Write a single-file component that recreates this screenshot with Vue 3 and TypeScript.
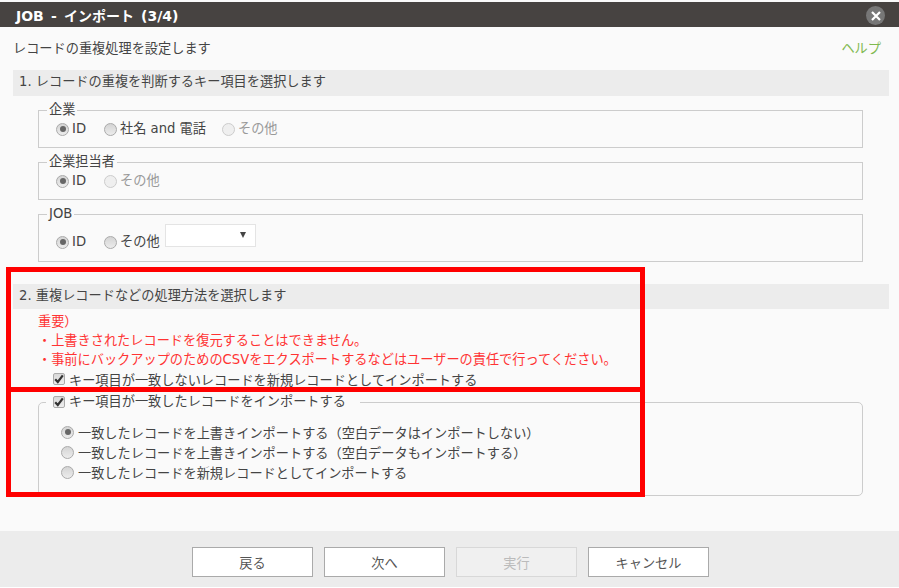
<script setup lang="ts">
interface Choice {
  label: string
  checked?: boolean
  disabled?: boolean
  gap: number
}

interface KeyGroup {
  legend: string
  tall?: boolean
  choices: Choice[]
}

const keyGroups: KeyGroup[] = [
  {
    legend: '企業',
    choices: [
      { label: 'ID', checked: true, gap: 18 },
      { label: '社名 and 電話', gap: 16 },
      { label: 'その他', disabled: true, gap: 0 },
    ],
  },
  {
    legend: '企業担当者',
    choices: [
      { label: 'ID', checked: true, gap: 18 },
      { label: 'その他', disabled: true, gap: 0 },
    ],
  },
  {
    legend: 'JOB',
    tall: true,
    choices: [
      { label: 'ID', checked: true, gap: 18 },
      { label: 'その他', gap: 0 },
    ],
  },
]

const importModes = [
  { label: '一致したレコードを上書きインポートする（空白データはインポートしない）', checked: true },
  { label: '一致したレコードを上書きインポートする（空白データもインポートする）', checked: false },
  { label: '一致したレコードを新規レコードとしてインポートする', checked: false },
]

const buttons = [
  { label: '戻る', disabled: false },
  { label: '次へ', disabled: false },
  { label: '実行', disabled: true },
  { label: 'キャンセル', disabled: false },
]
</script>

<template>
  <div class="dialog">
    <header class="title-bar">
      <span class="title">JOB - インポート (3/4)</span>
      <span class="close">
        <svg width="10" height="10" viewBox="0 0 10 10">
          <path d="M1 1 9 9M9 1 1 9" stroke="#fff" stroke-width="2.2" fill="none" />
        </svg>
      </span>
    </header>

    <main class="body">
      <div class="intro">
        <span>レコードの重複処理を設定します</span>
        <a class="help">ヘルプ</a>
      </div>

      <h2 class="section-head">1. レコードの重複を判断するキー項目を選択します</h2>

      <fieldset v-for="group in keyGroups" :key="group.legend" class="key-group" :class="{ tall: group.tall }">
        <legend>{{ group.legend }}</legend>
        <div class="choices">
          <label
            v-for="choice in group.choices"
            :key="choice.label"
            class="choice"
            :class="{ disabled: choice.disabled }"
            :style="{ marginRight: choice.gap + 'px' }"
          >
            <i class="radio" :class="{ checked: choice.checked }"></i>{{ choice.label }}
          </label>
          <div v-if="group.tall" class="select">
            <span class="arrow"></span>
          </div>
        </div>
      </fieldset>

      <h2 class="section-head second">2. 重複レコードなどの処理方法を選択します</h2>

      <div class="warning">
        <p>重要）</p>
        <p>・上書きされたレコードを復元することはできません。</p>
        <p>・事前にバックアップのためのCSVをエクスポートするなどはユーザーの責任で行ってください。</p>
      </div>

      <label class="check-row">
        <i class="check"><svg width="10" height="10" viewBox="0 0 10 10"><path d="M1.2 5.2 3.8 8 8.8 1.4" stroke="#333" stroke-width="2.2" fill="none" /></svg></i>
        キー項目が一致しないレコードを新規レコードとしてインポートする
      </label>

      <fieldset class="match-group">
        <legend>
          <i class="check"><svg width="10" height="10" viewBox="0 0 10 10"><path d="M1.2 5.2 3.8 8 8.8 1.4" stroke="#333" stroke-width="2.2" fill="none" /></svg></i>
          キー項目が一致したレコードをインポートする
        </legend>
        <label v-for="mode in importModes" :key="mode.label" class="mode">
          <i class="radio" :class="{ checked: mode.checked }"></i>{{ mode.label }}
        </label>
      </fieldset>

      <div class="marker top-marker"></div>
      <div class="marker bottom-marker"></div>
    </main>

    <footer class="footer">
      <button v-for="btn in buttons" :key="btn.label" class="btn" :disabled="btn.disabled">{{ btn.label }}</button>
    </footer>
  </div>
</template>

<style>
html,
body {
  background: #fff;
}
</style>

<style scoped>
.dialog {
  width: 899px;
  height: 587px;
  padding-top: 2px;
  box-sizing: border-box;
  display: flex;
  flex-direction: column;
  font-family: "DejaVu Sans", "Noto Sans CJK JP", sans-serif;
  font-size: 13.2px;
  color: #444;
  background: #fafafa;
  overflow: hidden;
}

.title-bar {
  height: 25px;
  flex: none;
  background: #474341;
  display: flex;
  align-items: center;
  justify-content: space-between;
  padding: 0 14px 0 16px;
}

.title {
  color: #fff;
  font-size: 14px;
  font-weight: bold;
  word-spacing: 2.3px;
}

.close {
  width: 19px;
  height: 19px;
  margin-top: 2px;
  border-radius: 50%;
  background: #777;
  display: flex;
  align-items: center;
  justify-content: center;
}

.body {
  position: relative;
  flex: 1;
  padding: 0 10px 0 13px;
}

.intro {
  height: 43px;
  padding: 0 8px 2px 0;
  display: flex;
  align-items: center;
  justify-content: space-between;
  box-sizing: border-box;
}

.help {
  color: #7fb94f;
}

.section-head {
  margin: 0;
  height: 26px;
  line-height: 24px;
  padding-left: 6px;
  background: #ececec;
  font-size: 13.2px;
  font-weight: normal;
  color: #444;
}

.section-head.second {
  height: 25px;
  margin-top: 22px;
}

.key-group {
  margin: 5px 26px 0 25px;
  padding: 0 0 0 17px;
  height: 47px;
  box-sizing: border-box;
  border: 1px solid #ccc;
}

.key-group.tall {
  height: 57px;
}

.key-group legend {
  padding: 0 2px 1px;
  margin-left: -9px;
  line-height: 17px;
}

.choices {
  display: flex;
  align-items: center;
  height: 20px;
}

.tall .choices {
  margin-top: 7px;
  height: 24px;
}

.choice {
  display: flex;
  align-items: center;
  white-space: nowrap;
  line-height: 18px;
}

.choice.disabled {
  color: #999;
}

.radio {
  width: 13px;
  height: 13px;
  margin-right: 3px;
  flex: none;
  box-sizing: border-box;
  border: 1px solid #aaa;
  border-radius: 50%;
  background: linear-gradient(#d4d4d4, #ececec);
  display: inline-block;
  position: relative;
}

.disabled .radio {
  border-color: #ccc;
  background: #efefef;
}

.radio.checked::after {
  content: "";
  position: absolute;
  left: 2.5px;
  top: 2.5px;
  width: 6px;
  height: 6px;
  border-radius: 50%;
  background: #666;
}

.select {
  width: 91px;
  height: 23px;
  margin-left: 5px;
  box-sizing: border-box;
  background: #fff;
  border: 1px solid #e4e4e4;
  position: relative;
  top: -7px;
}

.arrow {
  position: absolute;
  right: 9px;
  top: 7px;
  border-left: 3.5px solid transparent;
  border-right: 3.5px solid transparent;
  border-top: 6px solid #444;
}

.warning {
  padding: 3px 0 0 25px;
  color: #f33;
  line-height: 19px;
}

.warning p {
  margin: 0;
}

.check-row {
  height: 20px;
  margin-left: 40px;
  display: flex;
  align-items: center;
  white-space: nowrap;
}

.check {
  width: 12px;
  height: 12px;
  margin-right: 4px;
  box-sizing: border-box;
  border: 1px solid #aaa;
  border-radius: 2px;
  background: linear-gradient(#d8d8d8, #eee);
  display: inline-flex;
  align-items: center;
  justify-content: center;
  flex: none;
}

.match-group {
  margin: 3px 26px 0 25px;
  padding: 0 0 0 22px;
  height: 104px;
  box-sizing: border-box;
  border: 1px solid #ccc;
  border-radius: 5px;
}

.match-group legend {
  margin-left: -15px;
  padding: 0 14px 0 7px;
  line-height: 20px;
  display: flex;
  align-items: center;
  white-space: nowrap;
}

.mode {
  height: 20px;
  display: flex;
  align-items: center;
  white-space: nowrap;
}

.mode .radio {
  margin-right: 4px;
}

.match-group legend + .mode {
  margin-top: 10px;
}

.marker {
  position: absolute;
  left: 6px;
  width: 639px;
  box-sizing: border-box;
  border: 5px solid #f00;
  pointer-events: none;
}

.top-marker {
  top: 240px;
  height: 125px;
}

.bottom-marker {
  top: 360px;
  height: 110px;
}

.footer {
  height: 56px;
  flex: none;
  background: #ececec;
  display: flex;
  justify-content: center;
  align-items: flex-start;
  gap: 11px;
  padding: 16px 0 0 2px;
  box-sizing: border-box;
}

.btn {
  width: 121px;
  height: 30px;
  padding: 0;
  background: #fff;
  border: 1px solid #aaa;
  font: inherit;
  color: #555;
}

.btn:disabled {
  background: #f0f0f0;
  border-color: #d8d8d8;
  color: #bbb;
}
</style>
